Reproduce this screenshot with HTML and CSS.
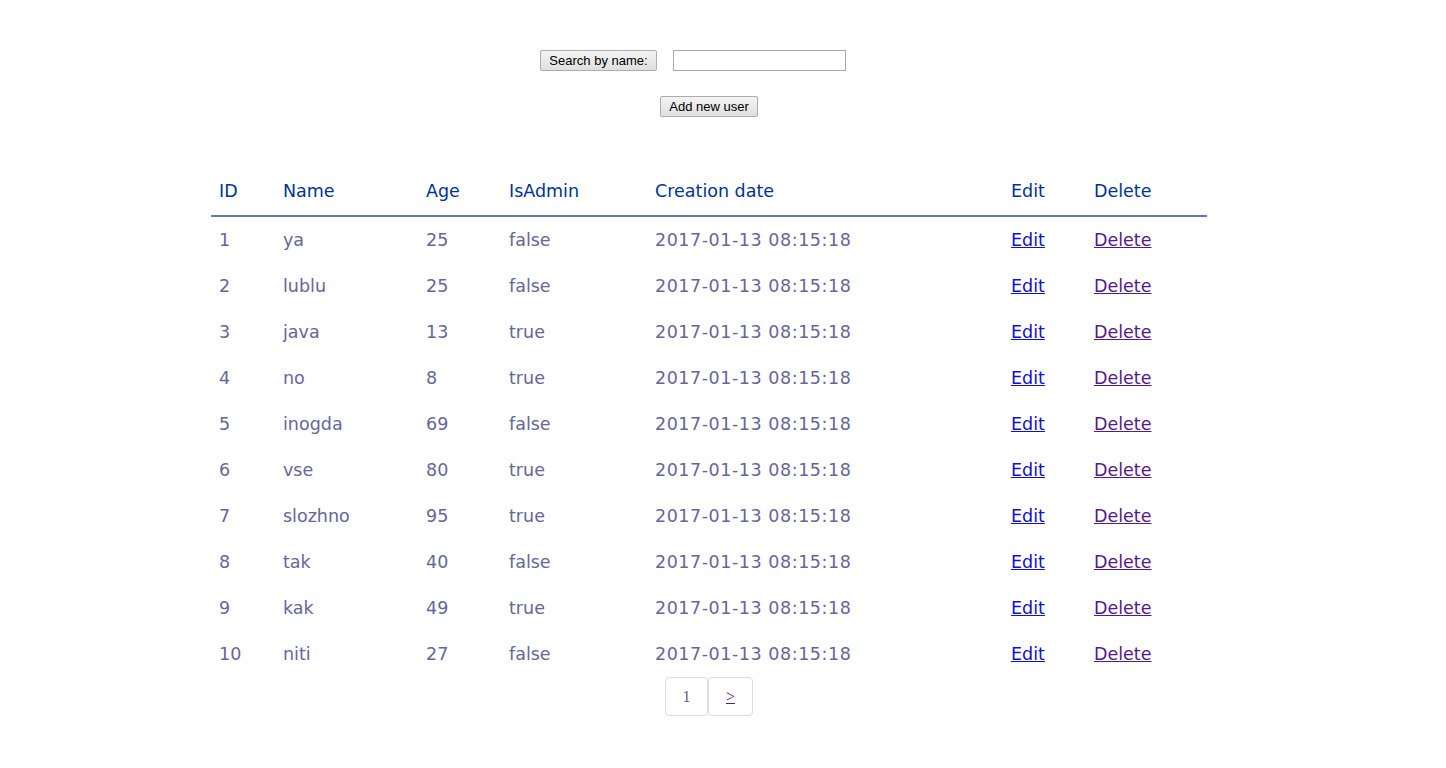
FILE: index.html
```html
<!DOCTYPE html>
<html>
<head>
<meta charset="utf-8">
<link rel="stylesheet" href="styles.css">
</head>
<body>
<div class="page">
  <form class="search">
    <button type="button" class="btn">Search by name:</button>
    <input type="text" class="field">
  </form>
  <div class="add">
    <button type="button" class="btn">Add new user</button>
  </div>
  <table class="users">
    <colgroup>
      <col class="c-id"><col class="c-name"><col class="c-age"><col class="c-admin"><col class="c-date"><col class="c-edit"><col class="c-del">
    </colgroup>
    <thead>
      <tr><th>ID</th><th>Name</th><th>Age</th><th>IsAdmin</th><th>Creation date</th><th>Edit</th><th>Delete</th></tr>
    </thead>
    <tbody>
      <tr><td>1</td><td>ya</td><td>25</td><td>false</td><td class="date">2017-01-13 08:15:18</td><td><a class="edit" href="#">Edit</a></td><td><a class="del" href="#">Delete</a></td></tr>
      <tr><td>2</td><td>lublu</td><td>25</td><td>false</td><td class="date">2017-01-13 08:15:18</td><td><a class="edit" href="#">Edit</a></td><td><a class="del" href="#">Delete</a></td></tr>
      <tr><td>3</td><td>java</td><td>13</td><td>true</td><td class="date">2017-01-13 08:15:18</td><td><a class="edit" href="#">Edit</a></td><td><a class="del" href="#">Delete</a></td></tr>
      <tr><td>4</td><td>no</td><td>8</td><td>true</td><td class="date">2017-01-13 08:15:18</td><td><a class="edit" href="#">Edit</a></td><td><a class="del" href="#">Delete</a></td></tr>
      <tr><td>5</td><td>inogda</td><td>69</td><td>false</td><td class="date">2017-01-13 08:15:18</td><td><a class="edit" href="#">Edit</a></td><td><a class="del" href="#">Delete</a></td></tr>
      <tr><td>6</td><td>vse</td><td>80</td><td>true</td><td class="date">2017-01-13 08:15:18</td><td><a class="edit" href="#">Edit</a></td><td><a class="del" href="#">Delete</a></td></tr>
      <tr><td>7</td><td>slozhno</td><td>95</td><td>true</td><td class="date">2017-01-13 08:15:18</td><td><a class="edit" href="#">Edit</a></td><td><a class="del" href="#">Delete</a></td></tr>
      <tr><td>8</td><td>tak</td><td>40</td><td>false</td><td class="date">2017-01-13 08:15:18</td><td><a class="edit" href="#">Edit</a></td><td><a class="del" href="#">Delete</a></td></tr>
      <tr><td>9</td><td>kak</td><td>49</td><td>true</td><td class="date">2017-01-13 08:15:18</td><td><a class="edit" href="#">Edit</a></td><td><a class="del" href="#">Delete</a></td></tr>
      <tr><td>10</td><td>niti</td><td>27</td><td>false</td><td class="date">2017-01-13 08:15:18</td><td><a class="edit" href="#">Edit</a></td><td><a class="del" href="#">Delete</a></td></tr>
    </tbody>
  </table>
  <div class="pager">
    <span class="pg">1</span><a class="pg pg-link" href="#">&gt;</a>
  </div>
</div>
</body>
</html>
```

FILE: styles.css
```css
html, body {
  margin: 0;
  padding: 0;
  background: #fff;
}
.page {
  width: 1418px;
  padding-top: 50px;
}
.search {
  display: flex;
  justify-content: center;
  gap: 16px;
  margin: 0 0 0 -32px;
  height: 21px;
}
.btn {
  font-family: "Liberation Sans", Arial, sans-serif;
  font-size: 13px;
  color: #000;
  height: 21px;
  padding: 0 8px;
  border: 1px solid #adadad;
  border-radius: 2px;
  background: linear-gradient(#f4f4f4, #dfdfdf);
  line-height: 19px;
}
.field {
  width: 169px;
  height: 17px;
  padding: 1px;
  border: 1px solid #a9a9a9;
  margin: 0;
  box-sizing: content-box;
}
.add {
  display: flex;
  justify-content: center;
  margin-top: 25px;
}
.users {
  width: 996px;
  margin: 51px auto 0;
  border-collapse: collapse;
  table-layout: fixed;
  font-family: "DejaVu Sans", "Lucida Sans Unicode", sans-serif;
  font-size: 17.5px;
  text-align: left;
}
.c-id { width: 64px; }
.c-name { width: 143px; }
.c-age { width: 83px; }
.c-admin { width: 146px; }
.c-date { width: 356px; }
.c-edit { width: 83px; }
.c-del { width: 121px; }
.users th {
  font-weight: normal;
  color: #039;
  padding: 0 8px 2px;
  height: 45px;
  vertical-align: middle;
  border-bottom: 2px solid #6678b1;
  line-height: 22px;
}
.users td {
  color: #669;
  padding: 0 8px;
  height: 46px;
  line-height: 22px;
  vertical-align: middle;
}
.users td.date { letter-spacing: 0.55px; }
.users a.edit { color: #1010d0; }
.users a.del { color: #551a8b; }
.pager {
  display: flex;
  justify-content: center;
  margin-top: 0;
}
.pg {
  display: flex;
  align-items: center;
  justify-content: center;
  width: 41px;
  height: 37px;
  border: 1px solid #ddd;
  border-radius: 4px;
  font-family: "Liberation Serif", "Times New Roman", serif;
  font-size: 16px;
  color: #6a5a7a;
}
.pg-link {
  width: 43px;
  color: #551a8b;
  text-decoration: underline;
}
```
